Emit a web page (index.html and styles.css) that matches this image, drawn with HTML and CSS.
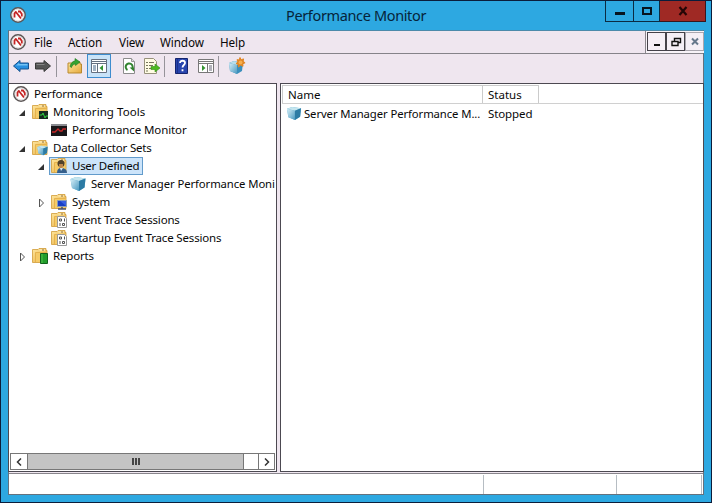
FILE: index.html
```html
<!DOCTYPE html>
<html lang="en">
<head>
<meta charset="utf-8">
<title>Performance Monitor</title>
<link rel="stylesheet" href="styles.css">
</head>
<body>
<svg class="defs" width="0" height="0" aria-hidden="true">
  <defs>
    <linearGradient id="gold" x1="0" y1="0" x2="1" y2="1"><stop offset="0" stop-color="#ffe8a0"/><stop offset="1" stop-color="#e5a93c"/></linearGradient>
    <linearGradient id="ice" x1="0" y1="0" x2="1" y2="1"><stop offset="0" stop-color="#d8f0f8"/><stop offset="1" stop-color="#4898c0"/></linearGradient>
    <symbol id="gauge" viewBox="0 0 16 16">
      <circle cx="8" cy="8" r="7.200" fill="#fff" stroke="#5b5555" stroke-width="1.500"/>
      <circle cx="8" cy="8" r="5.900" fill="none" stroke="#c9c4c4" stroke-width=".6"/>
      <path d="M4.500 10.500V6.500L6 4.500M5.500 4.500l5.500 7M8 4.500h2l1.800 2.500v2.500" fill="none" stroke="#c42424" stroke-width="1.800"/>
    </symbol>
    <symbol id="folder" viewBox="0 0 16 16">
      <path d="M.5 1.500h5.500l1-1h7v2h1v12H.5z" fill="url(#gold)" stroke="#d09c38" stroke-width=".8"/>
      <path d="M3.500 4.500h11v9.500h-11z" fill="#f5cb68"/><path d="M3.500 14V4.500h11" fill="none" stroke="#e2ac45" stroke-width=".8"/>
      <path d="M7.500 2h5.500" stroke="#fff2c4"/><path d="M10 2h2" stroke="#90713a"/>
    </symbol>
    <symbol id="cube" viewBox="0 0 16 16">
      <path d="M.5 3L6 1l9.500 1.500-1 9L9 15 2 12z" fill="#5eb0d2"/>
      <path d="M.5 3L6 1l9.500 1.500L9 5z" fill="#c4e5ee"/><path d="M.5 3L9 5v10l-7-3z" fill="url(#ice)"/><path d="M9 5l6.500-2.500-1 9L9 15z" fill="#2c7ba4"/>
    </symbol>
  </defs>
</svg>
<div class="window">
  <header class="titlebar">
    <svg class="icon app"><use href="#gauge"/></svg>
    <h1><span>Performance Monitor</span></h1>
    <div class="controls">
      <button class="min" aria-label="Minimize"><svg width="12" height="10"><path d="M1 7.500h10" stroke="#071520" stroke-width="3"/></svg></button>
      <button class="max" aria-label="Maximize"><svg width="12" height="10"><path d="M2 2h8v6H2z" fill="none" stroke="#071520" stroke-width="2"/></svg></button>
      <button class="close" aria-label="Close"><svg width="10" height="10"><path d="M1.500 1l7 8M8.500 1l-7 8" stroke="#250606" stroke-width="2.200"/></svg></button>
    </div>
  </header>
  <main class="client">
    <nav class="menubar">
      <svg class="icon"><use href="#gauge"/></svg>
      <span class="file">File</span><span class="action">Action</span><span class="view">View</span><span class="win">Window</span><span class="help">Help</span>
      <div class="child-controls">
        <button><svg width="12" height="12"><path d="M3 9h6" stroke="#111" stroke-width="2"/></svg></button>
        <button><svg width="12" height="12"><path d="M4.500 5V2.500h6v4H8M2 5.500h6v4H2z" fill="none" stroke="#111" stroke-width="1.400"/></svg></button>
        <button class="dim"><svg width="12" height="12"><path d="M3 2.500l6 6M9 2.500l-6 6" stroke="#66788c" stroke-width="2"/></svg></button>
      </div>
    </nav>
    <div class="toolbar">
      <svg class="icon back" viewBox="0 0 16 16"><path d="M.5 8L7 2.500V5h8.500v6H7v2.500z" fill="#278fe0" stroke="#17528e"/><path d="M2.500 8L6 5v1h8.500v1.500H3" fill="#73c2f4"/></svg>
      <svg class="icon fwd" viewBox="0 0 16 16"><path d="M15.500 8L9 2.500V5H.5v6H9v2.500z" fill="#555" stroke="#383838"/><path d="M1.500 6.500h8" stroke="#858585"/></svg>
      <i class="sep s1"></i>
      <svg class="icon up" viewBox="0 0 16 16"><path d="M1 5h4l1-1h7v2h1.500v9H1z" fill="url(#gold)" stroke="#b9892e"/><path d="M3 8.500C4 4 7 3 8 3V.5l5 3.500-4.500 3.500V6C6 6 5 8 4.500 9.500z" fill="#35a331" stroke="#1d7820" stroke-width=".6"/></svg>
      <span class="active"><svg class="icon" viewBox="0 0 16 16"><path d="M.5 1.500h15v13H.5z" fill="#fff" stroke="#657080"/><path d="M1 3.500h14M1 5.500h14M6.500 6v8" stroke="#657080"/><path d="M2 8h3M2 10h3M2 12h3" stroke="#426487"/><path d="M12 7v6L8.500 10z" fill="#349432"/><path d="M11 2.500h3" stroke="#fff"/></svg></span>
      <svg class="icon refresh" viewBox="0 0 16 16"><path d="M2.500.5h8l3 3v12h-11z" fill="#fff" stroke="#8b8b8b"/><path d="M10.500.5v3h3" fill="#ddd" stroke="#999"/><path d="M6.500 12a3.500 3.500 0 1 1 4.500-1" fill="none" stroke="#31832f" stroke-width="2"/><path d="M8.500 9.500H13v4z" fill="#31832f"/></svg>
      <svg class="icon export" viewBox="0 0 16 16"><path d="M.5.5h9l3 3v12H.5z" fill="#fffce4" stroke="#96917b"/><path d="M2 4.500h2m1 0h5M2 7.500h2m1 0h4M2 10.500h2m1 0h4M2 13h2" stroke="#77765d"/><path d="M7 8.500h4V6l5 4-5 4v-2.500H7z" fill="#4dba20" stroke="#348b18" stroke-width=".6"/></svg>
      <i class="sep s2"></i>
      <svg class="icon question" viewBox="0 0 16 16"><path d="M1.500.5h12v15h-12z" fill="#2845ae" stroke="#14246d"/><path d="M3.500 1v14" stroke="#1c328b"/><path d="M6 5c0-3 5-3 5 0 0 2-2.500 2-2.500 4.500M8.500 11.200v2" fill="none" stroke="#fff" stroke-width="1.800"/></svg>
      <svg class="icon panel" viewBox="0 0 16 16"><path d="M.5 1.500h15v13H.5z" fill="#fff" stroke="#777"/><path d="M1 3.500h14M1 5.500h14M9.500 6v8" stroke="#777"/><path d="M11 8h3M11 10h3M11 12h3" stroke="#667"/><path d="M4 7v6l3.500-3z" fill="#349432"/></svg>
      <i class="sep s3"></i>
      <svg class="icon new" viewBox="0 0 16 16"><path d="M0 5l5-2 9 2-1 8-5 3-7-3z" fill="#3a8fbc"/><path d="M0 5l8 2v9l-7-3z" fill="url(#ice)"/><path d="M0 5l5-2 9 2-6 2z" fill="#b8deeb"/><path d="M11-.5l1.200 2.200 2.400-.8-.5 2.400 2 1.500-2.300 1 .2 2.500-2.300-1.200L9.500 9l-.3-2.500L7 5.500l2-1.400L8 1.700l2.200.3z" fill="#e18624" stroke="#e18624"/><circle cx="11.500" cy="4.500" r="2" fill="#f6ae4d"/></svg>
    </div>
    <div class="panes">
      <aside class="tree">
        <div class="rows">
          <div class="row l0"><svg class="icon"><use href="#gauge"/></svg><span class="label t1">Performance</span></div>
          <div class="row l1"><i class="twist"><svg width="7" height="7"><path d="M6 0v6H0z" fill="#333"/></svg></i><svg class="icon"><use href="#folder"/><path d="M7 7h9v8H7z" fill="#182b20"/><path d="M7.500 11H10l1-2 2 5 1-2h2" fill="none" stroke="#32cf41"/></svg><span class="label t2">Monitoring Tools</span></div>
          <div class="row l2"><i class="twist"></i><svg class="icon"><path d="M0 2h16v12H0z" fill="#191719"/><path d="M0 3h16" stroke="#8b8c91" stroke-width="2"/><path d="M1 10h3l3-3 2 2h2l1-2h3" fill="none" stroke="#c72729" stroke-width="1.300"/></svg><span class="label t3">Performance Monitor</span></div>
          <div class="row l1"><i class="twist"><svg width="7" height="7"><path d="M6 0v6H0z" fill="#333"/></svg></i><svg class="icon"><use href="#folder"/><use href="#cube" x="5" y="5" width="11" height="11"/></svg><span class="label t4">Data Collector Sets</span></div>
          <div class="row l2 selected"><i class="twist"><svg width="7" height="7"><path d="M6 0v6H0z" fill="#333"/></svg></i><span class="pick"><svg class="icon"><use href="#folder"/><path d="M6 15q0-5 4-5 6 0 6 5z" fill="#355f8c"/><circle cx="10" cy="5.500" r="3.500" fill="#50412a"/><path d="M8 6h4v3l-2 2-2-2z" fill="#be874b"/><path d="M9 10l1 3 2-3" fill="#d8eaf4"/></svg><span class="label t5">User Defined</span></span></div>
          <div class="row l3"><i class="twist"></i><svg class="icon"><use href="#cube"/></svg><span class="label t6">Server Manager Performance Moni</span></div>
          <div class="row l2"><i class="twist"><svg width="7" height="11"><path d="M1.500 1v8l4-4z" fill="#fff" stroke="#555"/></svg></i><svg class="icon"><use href="#folder"/><path d="M6.500 6.500h9v6h-9z" fill="#183ec4" stroke="#8b9cb6"/><path d="M9 7h6v5z" fill="#365ee2"/><path d="M11 13v2M7 15h8" stroke="#4b536e" stroke-width="1.500"/></svg><span class="label t7">System</span></div>
          <div class="row l2"><i class="twist"></i><svg class="icon"><use href="#folder"/><path d="M6.500 4.500h7l2 2v9h-9z" fill="#fff" stroke="#999"/><path d="M8.500 7h2v2h-2zM13.500 6.500v3M9 11v3M11.500 11.500h2v2h-2z" fill="none" stroke="#555"/></svg><span class="label t8">Event Trace Sessions</span></div>
          <div class="row l2"><i class="twist"></i><svg class="icon"><use href="#folder"/><path d="M6.500 4.500h7l2 2v9h-9z" fill="#fff" stroke="#999"/><path d="M8.500 7h2v2h-2zM13.500 6.500v3M9 11v3M11.500 11.500h2v2h-2z" fill="none" stroke="#555"/></svg><span class="label t9">Startup Event Trace Sessions</span></div>
          <div class="row l1"><i class="twist"><svg width="7" height="11"><path d="M1.500 1v8l4-4z" fill="#fff" stroke="#555"/></svg></i><svg class="icon"><use href="#folder"/><path d="M8.500 5.500h7v10h-7z" fill="#229d2b" stroke="#12621c"/><path d="M10 6v9" stroke="#51c64d"/></svg><span class="label t10">Reports</span></div>
        </div>
        <div class="scrollbar"><span class="arrow"><svg width="6" height="8"><path d="M5 .5L1.500 4 5 7.500" fill="none" stroke="#333" stroke-width="1.500"/></svg></span><span class="thumb"><i></i><i></i><i></i></span><span class="track"></span><span class="arrow right"><svg width="6" height="8"><path d="M1 .5L4.500 4 1 7.500" fill="none" stroke="#333" stroke-width="1.500"/></svg></span></div>
      </aside>
      <section class="list">
        <div class="head"><div class="name"><span class="h1">Name</span></div><div class="status"><span class="h2">Status</span></div></div>
        <div class="item"><svg class="icon"><use href="#cube"/></svg><span class="iname"><span class="c1">Server Manager Performance M...</span></span><span class="c2">Stopped</span></div>
      </section>
    </div>
    <footer class="statusbar"><i class="a"></i><i class="b"></i><i class="c"></i></footer>
  </main>
</div>
</body>
</html>
```
FILE: styles.css
```css
* { box-sizing: border-box; }
body { margin: 0; font: 11.5px/18px "Noto Sans", "Open Sans", sans-serif; color: #080808; overflow: hidden; }
.defs { position: absolute; }
.icon { width: 16px; height: 16px; flex: none; overflow: visible; display: block; }
button { padding: 0; font: inherit; display: flex; align-items: center; justify-content: center; }
.window { width: 712px; height: 503px; background: #2da8e1; border: 1px solid #0b1d3b; padding: 0 7px 7px; display: flex; flex-direction: column; }
.titlebar { height: 29px; display: flex; flex: none; align-items: flex-start; }
.app { margin: 6px 0 0 2px; }
h1 { flex: none; margin: 3px 0 0 260px; width: 319px; font: 14.5px/22px "Noto Sans", sans-serif; color: #06243a; white-space: nowrap; letter-spacing: -.36px; }
.controls { display: flex; flex: none; height: 21px; }
.controls button { height: 21px; border: 1px solid #0b2b42; border-top: 0; background: #2da8e1; }
.controls .min { width: 29px; }
.controls .max { width: 26px; border-left: 0; }
.controls .close { width: 46px; background: #9f2924; border-left: 0; border-color: #38161e; }
.client { width: 696px; height: 466px; border: 1px solid #65717d; border-top-color: #4b8aaa; background: #efe6ef; display: flex; flex-direction: column; }
.menubar { height: 23px; flex: none; display: flex; align-items: center; padding-left: 1px; border-bottom: 1px solid #858389; white-space: nowrap; }
.menubar > span { font-size: 11.7px; letter-spacing: -.1px; margin-top: -1px; }
.file { width: 34px; margin-left: 8px; }
.action { width: 51px; }
.view { width: 41px; }
.win { width: 60px; }
.help { width: 30px; }
.child-controls { margin: 0 -1px 0 auto; height: 22px; display: flex; align-items: flex-start; border-left: 1px solid #89858b; padding: 1px 0 0 1px; background: #f8f3f8; }
.child-controls button { width: 19px; height: 19px; border: 1px solid #454249; background: #f5eff6; }
.child-controls .dim { border-color: #aaa6ae; }
.toolbar { height: 29px; flex: none; display: flex; align-items: flex-start; padding: 4px 0 0 4px; }
.fwd { margin-left: 6px; }
.sep { width: 1px; height: 21px; margin-top: -2px; background: #96939a; }
.s1 { margin-left: 5px; }
.up { margin-left: 10px; }
.active { width: 24px; height: 24px; padding: 3px; margin: -4px 0 0 4px; background: #c9e3f8; border: 1px solid #3d8cce; }
.refresh { margin-left: 10px; }
.export { margin-left: 7px; }
.s2 { margin-left: 4px; }
.question { margin-left: 9px; }
.panel { margin-left: 8px; }
.s3 { margin-left: 4px; }
.new { margin-left: 10px; }
.panes { height: 389px; flex: none; display: flex; gap: 3px; margin-left: -1px; margin-right: -1px; }
.tree { width: 269px; border: 1px solid #4c4951; background: #fff; display: flex; flex-direction: column; justify-content: space-between; }
.rows { overflow: hidden; padding-top: 1px; }
.row { height: 18px; display: flex; align-items: center; white-space: nowrap; }
.l0 { padding-left: 4px; }
.l1 { padding-left: 9px; }
.l2 { padding-left: 28px; }
.l3 { padding-left: 47px; }
.twist { width: 14px; flex: none; display: flex; padding: 3px 0 0 1px; }
.label { margin-left: 5px; letter-spacing: -.17px; }
.label.t2 { letter-spacing: .05px; }
.label.t3 { letter-spacing: -.1px; }
.label.t5 { letter-spacing: -.27px; }
.label.t6, .c1 { font-size: 11.3px; letter-spacing: -.09px; }
.pick { display: flex; align-items: center; height: 18px; margin-left: -2px; padding: 0 3px 0 1px; background: #cce4fa; border: 1px solid #629bcb; }
.scrollbar { height: 17px; margin: 0 1px 1px; display: flex; border: 1px solid #777; flex: none; }
.arrow { width: 16px; display: flex; align-items: center; justify-content: center; }
.thumb { width: 217px; background: #c4c4c4; border: solid #777; border-width: 0 1px; display: flex; gap: 1px; justify-content: center; align-items: center; }
.thumb i { width: 2px; height: 7px; background: #444; }
.track { flex: 1; }
.right { border-left: 1px solid #777; }
.list { width: 424px; border: 1px solid #4c4951; background: #fff; }
.head { height: 19px; margin: 1px 0 0 1px; display: flex; border-bottom: 1px solid #d0d0d0; }
.name, .status { border: 1px solid #cbcbcb; border-bottom: 0; padding-left: 5px; height: 18px; }
.name { width: 201px; }
.status { width: 56px; border-left: 0; }
.item { height: 18px; display: flex; align-items: center; margin-top: 1px; padding-left: 5px; white-space: nowrap; }
.iname { width: 186px; flex: none; padding-left: 2px; }
.c2 { letter-spacing: -.1px; }
.item .icon { height: 15px; margin-top: -2px; }
.statusbar { flex: 1; margin-top: 1px; border-top: 1px solid #88858c; background: #fff; display: flex; padding-top: 1px; }
.statusbar i { border-left: 1px solid #b6bdc3; }
.a { margin-left: 474px; width: 133px; }
.b { width: 85px; }
.c { width: 1px; }
```
